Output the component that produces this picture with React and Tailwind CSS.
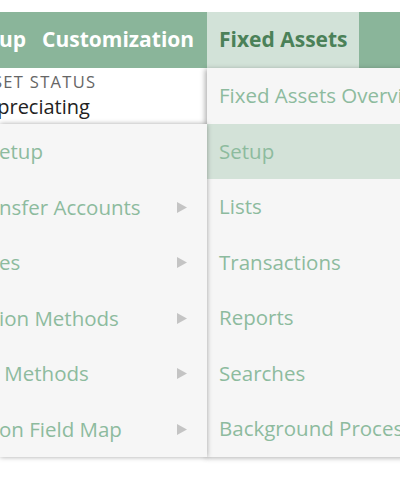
import React from "react"

const leftItems = [
  { label: "etup", arrow: false },
  { label: "nsfer Accounts", arrow: true },
  { label: "es", arrow: true },
  { label: "ion Methods", arrow: true },
  { label: " Methods", arrow: true },
  { label: "on Field Map", arrow: true }
]

const rightItems = [
  "Fixed Assets Overview",
  "Setup",
  "Lists",
  "Transactions",
  "Reports",
  "Searches",
  "Background Processing"
]

function Arrow() {
  return (
    <svg width="10" height="11" viewBox="0 0 10 11" className="shrink-0">
      <path d="M0 0 L10 5.5 L0 11 Z" fill="#c4c4c4" />
    </svg>
  )
}

export default function App() {
  return (
    <div className="relative h-[490px] w-[400px] overflow-hidden bg-white font-['Open_Sans',sans-serif]">

      <div className="h-[12px]" />

      {/* top nav */}
      <nav className="flex h-[56px] items-stretch bg-[#8ab59a] text-[21px] font-bold text-white">
        <div className="flex w-[207px] items-center whitespace-nowrap">
          <span className="ml-[-1px]">up</span>
          <span className="ml-[16px]">Customization</span>
        </div>
        <div className="flex w-[152px] items-center bg-[#d2e2d8] pl-[12px] text-[#4b8158]">
          Fixed Assets
        </div>
        <div className="flex-1" />
      </nav>

      <div className="flex">

        <div className="w-[207px] shrink-0">

          <div className="flex h-[56px] flex-col overflow-hidden whitespace-nowrap pt-[2px]">
            <span className="ml-[-7px] text-[16.5px] leading-[24px] tracking-[1.3px] text-[#666]">SET STATUS</span>
            <span className="ml-[-14px] text-[20px] leading-[26px] text-[#222]">epreciating</span>
          </div>

          <div className="relative z-10 bg-[#f6f6f6] shadow-[0_0_5px_rgba(0,0,0,0.35)]">
            {leftItems.map((item) => (
              <div key={item.label} className="flex h-[55.5px] items-center justify-between whitespace-pre pr-[20px] text-[20.5px] text-[#8dbb9e]">
                <span className="ml-[-1px]">{item.label}</span>
                {item.arrow && <Arrow />}
              </div>
            ))}
          </div>

        </div>

        <div className="relative z-0 w-[200px] shrink-0 bg-[#f6f6f6] shadow-[-2px_1px_5px_rgba(0,0,0,0.3)]">
          {rightItems.map((label) => (
            <div
              key={label}
              className={
                label === "Setup"
                  ? "flex h-[55.5px] items-center whitespace-nowrap bg-[#d3e2d8] pl-[12px] text-[20.5px] text-[#8dbb9e]"
                  : "flex h-[55.5px] items-center whitespace-nowrap pl-[12px] text-[20.5px] text-[#8dbb9e]"
              }
            >
              {label}
            </div>
          ))}
        </div>

      </div>

    </div>
  )
}
